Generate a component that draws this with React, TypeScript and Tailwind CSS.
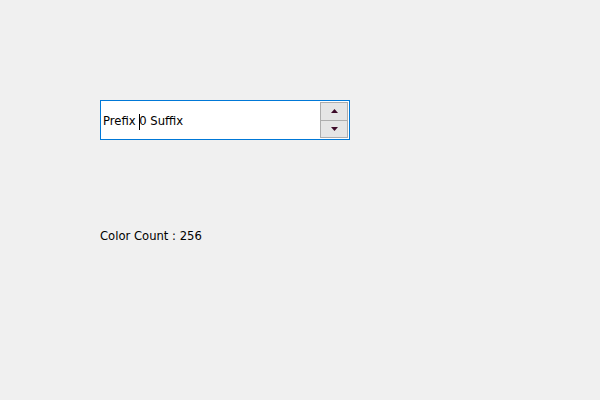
import React from "react";

export default function App() {
  return (
    <div
      className="w-[600px] h-[400px] bg-[#f0f0f0] flex flex-col pl-[100px] pt-[100px] text-[11.6px] text-black"
      style={{ fontFamily: '"DejaVu Sans", sans-serif' }}
    >
      {/* spin box */}
      <div className="w-[250px] h-[40px] border border-[#0078d7] bg-white flex items-stretch">
        <div className="flex-1 flex items-center pl-[2px] pt-[4px] whitespace-pre">
          <span>Prefix </span>
          <span className="w-px h-[16px] bg-black -mr-px"></span>
          <span>0 Suffix</span>
        </div>
        <div className="w-[29px] flex flex-col py-px pr-px">
          <div className="flex-1 border border-[#adadad] bg-[#e5e5e5] flex items-center justify-center">
            <svg width="7" height="4" viewBox="0 0 7 4">
              <path d="M0 4 L3.5 0 L7 4 Z" fill="#3c0a28" />
            </svg>
          </div>
          <div className="flex-1 border border-t-0 border-[#adadad] bg-[#e5e5e5] flex items-center justify-center">
            <svg width="7" height="4" viewBox="0 0 7 4">
              <path d="M0 0 L3.5 4 L7 0 Z" fill="#3c0a28" />
            </svg>
          </div>
        </div>
      </div>
      <div className="mt-[88px] leading-[16px]">Color Count : 256</div>
    </div>
  );
}
